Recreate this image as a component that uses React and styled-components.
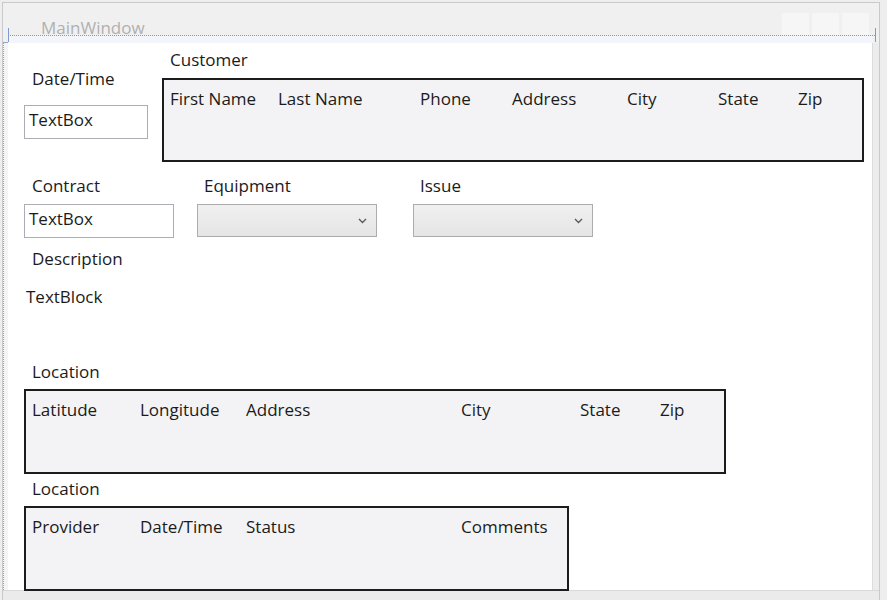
import React from 'react';
import styled, { createGlobalStyle } from 'styled-components';

const GlobalStyle = createGlobalStyle`
  html, body {
    margin: 0;
    padding: 0;
    background: #eeeeee;
    overflow: hidden;
  }
  body {
    font-family: "Open Sans", "Noto Sans", sans-serif;
    color: #1b1b1b;
  }
`;

const Window = styled.div`
  margin: 2px 0 0 2px;
  width: 876px;
  height: 598px;
  border: 1px solid #c9c9c9;
  border-bottom: none;
  display: flex;
  flex-direction: column;
  background: #f0f0f0;
`;

const TitleBar = styled.div`
  height: 40px;
  display: flex;
  flex-direction: column;
  flex-shrink: 0;
`;

const TitleRow = styled.div`
  height: 33px;
  display: flex;
  align-items: flex-end;
  padding: 0 6px 0 38px;
  border-bottom: 1px dotted #7d9bcf;
  margin-left: 5px;
  margin-right: 4px;
  box-sizing: border-box;
  position: relative;
`;

const Title = styled.div`
  font-size: 17px;
  line-height: 22px;
  color: #b0b0b0;
  margin-bottom: -4px;
  margin-left: -5px;
  flex: 1;
`;

const CaptionButtons = styled.div`
  display: flex;
  gap: 3px;
  align-self: flex-end;
`;

const CaptionButton = styled.div`
  width: 27px;
  height: 22px;
  background: #f6f6f6;
`;

const Tick = styled.div`
  position: absolute;
  top: 25px;
  width: 1px;
  height: 14px;
  background: #7d9bcf;
  left: ${p => (p.$side === 'left' ? '0' : 'auto')};
  right: ${p => (p.$side === 'right' ? '-1px' : 'auto')};
`;

const TitleBand = styled.div`
  flex: 1;
  background: #f3f5fa;
  margin-left: 5px;
  margin-right: 6px;
`;

const BodyRow = styled.div`
  display: flex;
  height: 547px;
  flex-shrink: 0;
`;

const Gutter = styled.div`
  width: 5px;
  position: relative;
  background: #f4f4f4;
  &::before {
    content: '';
    position: absolute;
    left: 0;
    top: 0;
    bottom: 0;
    border-left: 1px dotted #8fa5cf;
  }
  &::after {
    content: '';
    position: absolute;
    left: 0;
    top: -1px;
    width: 5px;
    border-top: 1px solid #8fa5cf;
  }
`;

const Client = styled.div`
  width: 864px;
  background: #ffffff;
  display: flex;
  flex-direction: column;
  position: relative;
`;

const RightStrip = styled.div`
  flex: 1;
  background: #ececec;
  border-left: 1px solid #dcdcdc;
`;

const BottomStrip = styled.div`
  flex: 1;
  background: #ebebeb;
  border-top: 1px solid #dadada;
`;

const TopSection = styled.div`
  display: flex;
  margin-top: 5px;
`;

const LeftColumn = styled.div`
  width: 154px;
  display: flex;
  flex-direction: column;
`;

const RightColumn = styled.div`
  display: flex;
  flex-direction: column;
`;

const Label = styled.div`
  font-size: 17px;
  line-height: 23px;
  padding-left: ${p => p.$indent ?? 24}px;
  margin-top: ${p => p.$top ?? 0}px;
  height: 23px;
  white-space: nowrap;
`;

const TextBox = styled.div`
  width: ${p => p.$width}px;
  height: 34px;
  box-sizing: border-box;
  border: 1px solid #abadb3;
  margin-left: 16px;
  margin-top: ${p => p.$top ?? 0}px;
  font-size: 17px;
  line-height: 28px;
  padding-left: 4px;
  background: #fff;
`;

const Grid = styled.div`
  width: ${p => p.$width}px;
  height: ${p => p.$height}px;
  box-sizing: border-box;
  border: 2px solid #1c1c1c;
  background: #f3f3f5;
  margin-left: ${p => p.$left ?? 16}px;
  margin-top: ${p => p.$top ?? 0}px;
  padding: 7px 0 0 6px;
  flex-shrink: 0;
`;

const HeaderRow = styled.div`
  display: grid;
  grid-template-columns: ${p => p.$cols};
  font-size: 17px;
  line-height: 23px;
  white-space: nowrap;
`;

const FieldRow = styled.div`
  display: flex;
  margin-top: 12px;
`;

const Field = styled.div`
  width: ${p => p.$width}px;
  display: flex;
  flex-direction: column;
`;

const ComboBox = styled.div`
  width: 180px;
  height: 33px;
  box-sizing: border-box;
  border: 1px solid #acacac;
  background: linear-gradient(#f0f0f0, #e5e5e5);
  display: flex;
  align-items: center;
  justify-content: flex-end;
  padding-right: 9px;
  margin-top: 7px;
  color: #555;
`;

const Chevron = () => (
  <svg width="9" height="6" viewBox="0 0 9 6">
    <path d="M1 1 L4.5 4.5 L8 1" fill="none" stroke="#5a5a5a" strokeWidth="1.4" />
  </svg>
);

const customerCols = ['First Name', 'Last Name', 'Phone', 'Address', 'City', 'State', 'Zip'];
const locationCols = ['Latitude', 'Longitude', 'Address', 'City', 'State', 'Zip'];
const providerCols = ['Provider', 'Date/Time', 'Status', 'Comments'];

function Header({ cols, labels }) {
  return (
    <HeaderRow $cols={cols}>
      {labels.map(l => <div key={l}>{l}</div>)}
    </HeaderRow>
  );
}

export default function App() {
  return (
    <>
      <GlobalStyle />
      <Window>
        <TitleBar>
          <TitleRow>
            <Title>MainWindow</Title>
            <CaptionButtons>
              <CaptionButton />
              <CaptionButton />
              <CaptionButton />
            </CaptionButtons>
            <Tick $side="left" />
            <Tick $side="right" />
          </TitleRow>
          <TitleBand />
        </TitleBar>
        <BodyRow>
          <Gutter />
          <Client>
            <TopSection>
              <LeftColumn>
                <Label $top={19}>Date/Time</Label>
                <TextBox $width={124} $top={15}>TextBox</TextBox>
              </LeftColumn>
              <RightColumn>
                <Label $indent={8}>Customer</Label>
                <Grid $width={702} $height={84} $left={0} $top={7}>
                  <Header cols="108px 142px 92px 115px 91px 80px auto" labels={customerCols} />
                </Grid>
              </RightColumn>
            </TopSection>
            <FieldRow>
              <Field $width={189}>
                <Label>Contract</Label>
                <TextBox $width={150} $top={7}>TextBox</TextBox>
              </Field>
              <Field $width={216}>
                <Label $indent={7}>Equipment</Label>
                <ComboBox><Chevron /></ComboBox>
              </Field>
              <Field $width={200}>
                <Label $indent={7}>Issue</Label>
                <ComboBox><Chevron /></ComboBox>
              </Field>
            </FieldRow>
            <Label $top={9}>Description</Label>
            <Label $top={15} $indent={18}>TextBlock</Label>
            <Label $top={52}>Location</Label>
            <Grid $width={702} $height={85} $top={6}>
              <Header cols="108px 106px 215px 119px 80px auto" labels={locationCols} />
            </Grid>
            <Label $top={3}>Location</Label>
            <Grid $width={545} $height={85} $top={6}>
              <Header cols="108px 106px 215px auto" labels={providerCols} />
            </Grid>
          </Client>
          <RightStrip />
        </BodyRow>
        <BottomStrip />
      </Window>
    </>
  );
}
